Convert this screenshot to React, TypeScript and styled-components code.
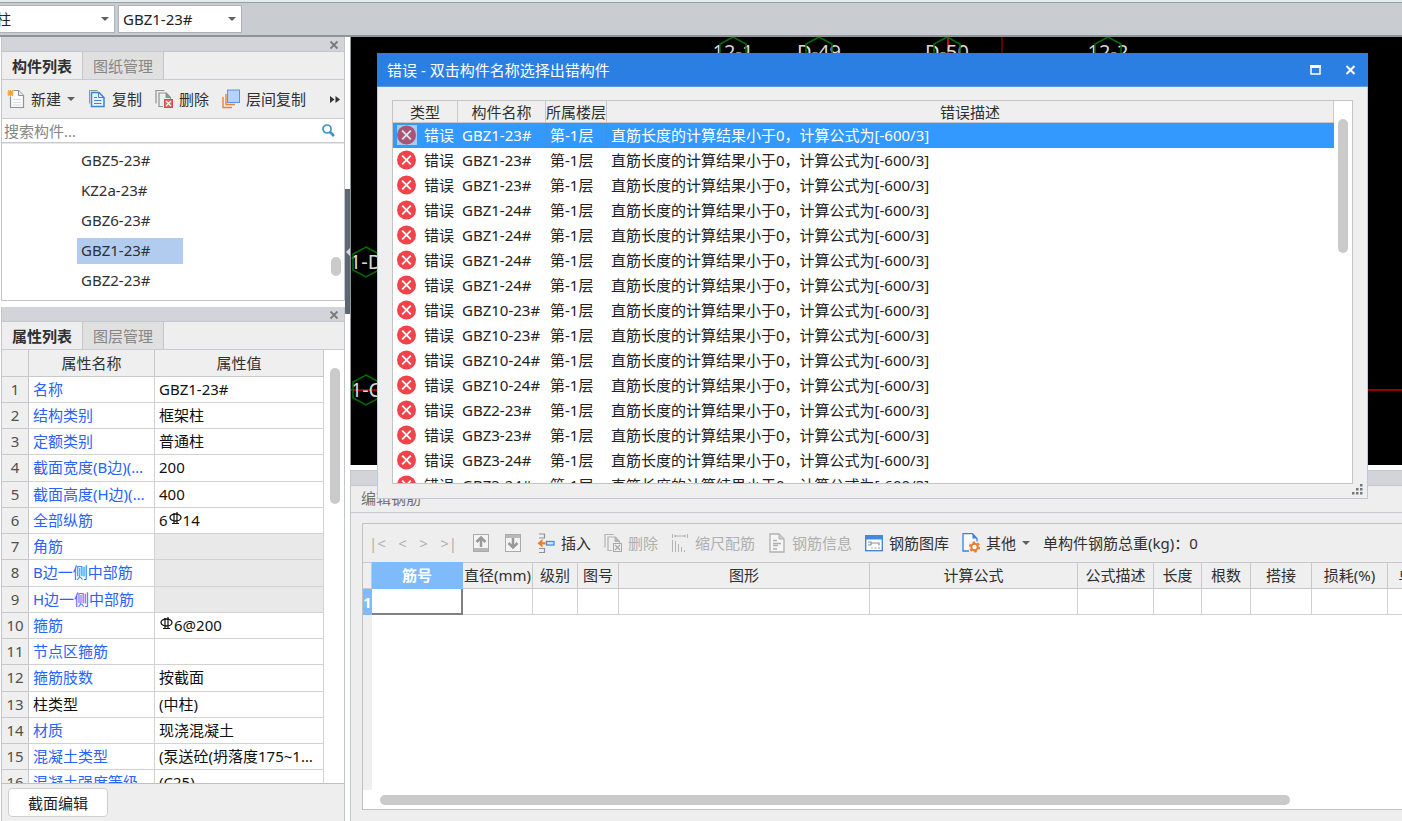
import React from 'react';
import styled, { createGlobalStyle, css } from 'styled-components';

const Global = createGlobalStyle`
  *, *::before, *::after { box-sizing: border-box; }
  html, body { margin: 0; padding: 0; }
  body, button, input, select {
    font-family: "Noto Sans", "Noto Sans CJK SC", sans-serif;
    font-size: 15px;
    line-height: 20px;
    color: #303030;
  }
  button { border: 0; padding: 0; background: none; white-space: nowrap; }
  table { border-collapse: separate; border-spacing: 0; table-layout: fixed; }
  th, td { padding: 0; font-weight: 400; white-space: nowrap; }
  ul { list-style: none; margin: 0; padding: 0; }
  h2 { margin: 0; font-size: 15px; font-weight: 400; }
`;

const Page = styled.div`
  display: flex;
  flex-direction: column;
  height: 100vh;
  overflow: hidden;
  background: #fff;
`;

/* ---------- top bar ---------- */

const TopBar = styled.header`
  flex: none;
  display: flex;
  align-items: flex-start;
  gap: 3px;
  height: 37px;
  padding-top: 3px;
  overflow: hidden;
  background: #c9ccd1;
  border-top: 2px solid #e2ebee;
  border-bottom: 2px solid #8f9498;
  box-shadow: inset 0 1px 0 #9b9fa4;
`;

const ComboWrap = styled.div`
  position: relative;
  flex: none;
  display: flex;
`;

const Combo = styled.select<{ $w: number; $cut?: boolean }>`
  appearance: none;
  width: ${p => p.$w}px;
  height: 28px;
  margin-left: ${p => (p.$cut ? -9 : 0)}px;
  padding: 0 20px 0 4px;
  border: 1px solid #aeb1b6;
  border-radius: 0;
  background: #fff;
  color: #222;
`;

const ComboArrow = styled.span`
  position: absolute;
  right: 6px;
  top: 12px;
  border: 4px solid transparent;
  border-top-color: #606060;
  border-bottom: 0;
`;

/* ---------- frame ---------- */

const Body = styled.div`
  flex: 1;
  min-height: 0;
  display: flex;
`;

const Sidebar = styled.aside`
  flex: none;
  display: flex;
  flex-direction: column;
  gap: 6px;
  width: 345px;
  padding-left: 1px;
`;

const Splitter = styled.div`
  flex: none;
  width: 5px;
  padding-top: 152px;
  background: #fff;
`;

const SplitHandle = styled.button`
  display: flex;
  align-items: center;
  justify-content: center;
  width: 5px;
  height: 125px;
  background: #5d6873;
`;

const Main = styled.main`
  position: relative;
  flex: 1;
  min-width: 0;
  display: flex;
  flex-direction: column;
`;

const Panel = styled.section<{ $fill?: boolean }>`
  display: flex;
  flex-direction: column;
  min-height: 0;
  background: #eee;
  border: 1px solid #c3c5ca;
  border-top: 0;
  ${p => (p.$fill ? css`flex: 1; border-bottom: 0;` : css`flex: 0 0 264px;`)}
`;

const PanelBar = styled.div`
  flex: none;
  display: flex;
  justify-content: flex-end;
  align-items: center;
  height: 15px;
  padding-right: 5px;
  background: #d3d4da;
  border-bottom: 1px solid #c3c7cc;
`;

const Tabs = styled.div`
  flex: none;
  display: flex;
  height: 28px;
  border-bottom: 1px solid #c8cbd0;
`;

const Tab = styled.button<{ $on?: boolean }>`
  width: 81px;
  border-right: 1px solid #c3c7cc;
  background: ${p => (p.$on ? '#eee' : '#e0e0e0')};
  color: ${p => (p.$on ? '#303030' : '#868686')};
  font-weight: ${p => (p.$on ? 700 : 400)};
`;

/* ---------- component list ---------- */

const Tools = styled.div`
  flex: none;
  display: flex;
  align-items: center;
  gap: 13px;
  height: 38px;
  padding-left: 5px;
`;

const Tool = styled.button<{ $off?: boolean; $end?: boolean }>`
  flex: none;
  display: flex;
  align-items: center;
  gap: 6px;
  color: ${p => (p.$off ? '#b0b0b0' : '#303030')};
  ${p => p.$end && css`margin-left: auto; padding-right: 3px;`}
  svg { flex: none; }
`;

const Caret = styled.span`
  border: 4px solid transparent;
  border-top-color: #606060;
  border-bottom: 0;
`;

const Search = styled.label`
  flex: none;
  display: flex;
  align-items: center;
  height: 25px;
  padding: 0 9px 0 2px;
  background: #fff;
  border-top: 1px solid #c8cbd0;
  border-bottom: 1px solid #c8cbd0;
`;

const SearchInput = styled.input`
  flex: 1;
  min-width: 0;
  height: 22px;
  border: 0;
  padding: 0;
  outline: 0;
  background: none;
  &::placeholder { color: #868686; opacity: 1; }
`;

const ListArea = styled.div`
  flex: 1;
  min-height: 0;
  display: flex;
  justify-content: space-between;
  padding: 2px 3px 0 75px;
  background: #fff;
  border-top: 1px solid #e6e6e6;
  overflow: hidden;
`;

const ListItem = styled.li`
  display: flex;
  align-items: center;
  height: 30px;
`;

const ListLabel = styled.span<{ $on?: boolean }>`
  width: 106px;
  height: 26px;
  padding: 2px 4px;
  background: ${p => (p.$on ? '#b1ccee' : 'transparent')};
`;

const Thumb = styled.div<{ $top: number; $h: number }>`
  flex: none;
  width: 10px;
  height: ${p => p.$h}px;
  margin-top: ${p => p.$top}px;
  border-radius: 5px;
  background: #cacaca;
`;

/* ---------- property grid ---------- */

const PropArea = styled.div`
  flex: 1;
  min-height: 0;
  display: flex;
  align-items: flex-start;
  justify-content: space-between;
  padding-right: 4px;
  overflow: hidden;
  background: #fff;
  border-bottom: 1px solid #c0c0c0;
`;

const PropTable = styled.table`
  flex: none;
  width: 322px;
  th, td {
    height: 26px;
    padding: 0 4px 2px;
    border-right: 1px solid #d2d2d2;
    border-bottom: 1px solid #d2d2d2;
    overflow: hidden;
    text-overflow: ellipsis;
    text-align: left;
  }
  thead th {
    height: 27px;
    padding-bottom: 0;
    background: #efefef;
    border-color: #c6c8cb;
    text-align: center;
  }
  tbody tr:nth-child(4n) td { height: 27px; }
`;

const NumCell = styled.td`
  && { padding: 0 0 2px; text-align: center; background: #efefef; border-color: #c6c8cb; color: #505050; }
`;

const NameCell = styled.td<{ $plain?: boolean }>`
  color: ${p => (p.$plain ? '#111' : '#2a62ff')};
`;

const ValueCell = styled.td<{ $off?: boolean }>`
  color: #111;
  background: ${p => (p.$off ? '#e9e9e9' : '#fff')};
  svg { vertical-align: 1px; margin: 0 1px; }
`;

const Footer = styled.div`
  flex: none;
  height: 37px;
  padding: 4px 6px;
`;

const FooterButton = styled.button`
  width: 100px;
  height: 29px;
  border: 1px solid #cfcfcf;
  border-radius: 4px;
  background: #fff;
  color: #222;
`;

/* ---------- drawing view ---------- */

const Canvas = styled.svg`
  flex: none;
  display: block;
  width: 100%;
  height: 428px;
  background: #000;
  border-left: 1px solid #8f9498;
  text {
    font-family: "Noto Sans", sans-serif;
    font-size: 20px;
    fill: #d8d8d8;
  }
`;

/* ---------- rebar editor ---------- */

const Editor = styled.section`
  flex: 1;
  min-height: 0;
  display: flex;
  flex-direction: column;
  margin-top: 5px;
  background: #eee;
  border-top: 1px solid #c3c7cc;
  border-left: 1px solid #c3c7cc;
`;

const EditorTitle = styled.h2`
  flex: none;
  height: 27px;
  padding: 2px 10px;
  color: #707070;
  border-bottom: 1px solid #c8cbd0;
`;

const EditorBox = styled.div`
  flex: 1;
  min-height: 0;
  display: flex;
  flex-direction: column;
  margin: 10px 0 11px 11px;
  border: 1px solid #c0c2c5;
  border-right: 0;
  overflow: hidden;
`;

const EditorTools = styled.div`
  flex: none;
  display: flex;
  align-items: center;
  gap: 13px;
  height: 38px;
  padding-left: 6px;
  white-space: nowrap;
`;

const Nav = styled.div`
  flex: none;
  display: flex;
  align-items: center;
  gap: 16px;
  padding-right: 3px;
`;

const NavSteps = styled.div`
  display: flex;
  justify-content: space-between;
  width: 88px;
`;

const GridArea = styled.div`
  flex: 1;
  min-height: 0;
  overflow: hidden;
  background: linear-gradient(to right, #efefef 9px, #fff 9px);
`;

const RebarTable = styled.table`
  width: 1103px;
  th {
    height: 27px;
    padding-bottom: 1px;
    background: #efefef;
    border: 1px solid #c6c8cb;
    border-left: 0;
  }
  td {
    height: 26px;
    background: #fff;
    border-right: 1px solid #d2d2d2;
    border-bottom: 1px solid #d2d2d2;
  }
  th.on, td.num {
    background: #7fbafa;
    border-color: #7fbafa;
    color: #fff;
    font-weight: 700;
  }
  td.num { text-align: center; }
  td.current { border-right: 2px solid #808080; border-bottom: 2px solid #808080; }
`;

const HScroll = styled.div`
  flex: none;
  height: 19px;
  padding: 5px 112px 4px 17px;
  background: #fff;
`;

const HThumb = styled.div`
  height: 10px;
  border-radius: 5px;
  background: #cacaca;
`;

/* ---------- error dialog ---------- */

const Dialog = styled.section`
  position: absolute;
  left: 27px;
  right: 34px;
  top: 16px;
  display: flex;
  flex-direction: column;
  height: 446px;
  background: #efefef;
`;

const DialogBar = styled.header`
  flex: none;
  display: flex;
  align-items: center;
  gap: 24px;
  height: 34px;
  padding: 0 12px 0 10px;
  background: #2c7fe2;
  border-bottom: 1px solid #5b9bea;
  h2 { flex: 1; color: #fff; }
  svg { display: block; }
`;

const DialogBody = styled.div`
  flex: 1;
  min-height: 0;
  display: flex;
  flex-direction: column;
  align-items: flex-end;
  padding: 13px 14px 0;
  border: 1px solid #bccadb;
  border-top: 0;
`;

const ErrorArea = styled.div`
  flex: none;
  display: flex;
  align-items: flex-start;
  width: 100%;
  height: 384px;
  padding-right: 4px;
  overflow: hidden;
  background: #fff;
  border: 1px solid #c4c4c4;
`;

const ErrorTable = styled.table`
  flex: 1;
  width: 100%;
  margin-right: 4px;
  th {
    height: 22px;
    background: #efefef;
    border-right: 1px solid #c6c8cb;
    border-bottom: 1px solid #c6c8cb;
  }
  td { height: 25px; padding: 0 4px 2px; color: #222; overflow: hidden; }
`;

const ErrorRow = styled.tr<{ $on?: boolean }>`
  ${p => p.$on && css`td { background: #3399ff; color: #fff; } td.focus { outline: 1px dotted #b0703c; outline-offset: -1px; }`}
`;

const TypeCell = styled.div`
  display: flex;
  align-items: center;
  gap: 7px;
  svg { flex: none; }
`;

const Grip = styled.svg`
  flex: none;
  display: block;
  margin-right: -10px;
`;

/* ---------- icons ---------- */

const Close = () => (
  <svg width="10" height="10" viewBox="0 0 10 10"><path d="M1.500 1.500l7 7M8.500 1.500l-7 7" stroke="#7c7c7c" strokeWidth="1.900" /></svg>
);

const NewIcon = () => (
  <svg width="18" height="20" viewBox="0 0 18 20" fill="none">
    <path d="M3.500 1.500h8l5 5v12h-13z" fill="#fafafa" stroke="#8c9399" strokeWidth="1.200" />
    <path d="M11.500 1.500v5h5" stroke="#8c9399" fill="#e4e6e8" />
    <path d="M6 10.500h8M6 13.500h8M6 16h8" stroke="#dedede" />
    <rect x="0" y="1" width="6.500" height="6.500" fill="#efefef" />
    <path d="M3.500 1v6M.5 4h6M1 1.500l5 5M6 1.500l-5 5" stroke="#f5a32c" strokeWidth="1.400" />
  </svg>
);

const CopyIcon = () => (
  <svg width="18" height="20" viewBox="0 0 18 20" fill="none">
    <path d="M1.500 14.500v-13h8" stroke="#8c9399" />
    <path d="M3.500 3.500h7.500l5 5v9h-12.500z" fill="#e9f2fd" stroke="#3e82d8" strokeWidth="1.500" />
    <path d="M10.500 3.500v5h5.500" stroke="#3e82d8" />
    <path d="M6 8.500h3M6 11.500h7.500M6 14.500h7.500" stroke="#3e82d8" />
  </svg>
);

const DeleteIcon = ({ off = false }: { off?: boolean }) => {
  const line = off ? '#b4b4b4' : '#8c9399';
  const box = off ? '#a8a8a8' : '#d05050';
  return (
    <svg width="18" height="20" viewBox="0 0 18 20" fill="none">
      <path d="M1 14.500v-13h8.500M8 17.500h-4v-13.500h7.500l4 4.500v2" stroke={line} strokeWidth="1.200" />
      <path d="M11 4v4.500h4.500z" stroke={line} fill={line} />
      <rect x="9.500" y="10.500" width="8" height="8" fill={off ? '#efefef' : '#d96464'} stroke={box} />
      <path d="M11 12l5 5M16 12l-5 5" stroke={off ? '#a8a8a8' : '#fff'} strokeWidth="1.200" />
    </svg>
  );
};

const FloorIcon = () => (
  <svg width="18" height="20" viewBox="0 0 18 20" fill="none">
    <path d="M1 8v10.500h9M4 5v10.500h9" stroke="#ee8138" strokeWidth="1.400" />
    <rect x="5.500" y="1" width="12" height="12.500" fill="#b5d3fa" stroke="#5a96e6" />
  </svg>
);

const More = () => (
  <svg width="11" height="9" viewBox="0 0 11 9" fill="#333"><path d="M0 1l4.500 3.500L0 8zM5.500 1L10 4.500 5.500 8z" /></svg>
);

const SearchIcon = () => (
  <svg width="13" height="13" viewBox="0 0 13 13" fill="none" stroke="#3f93c8">
    <circle cx="5" cy="5" r="4" strokeWidth="1.700" /><path d="M8 8l4 4" strokeWidth="2.600" />
  </svg>
);

const Rebar = () => (
  <svg width="13" height="13" viewBox="0 0 13 13" fill="none" stroke="#111">
    <ellipse cx="6.500" cy="5.500" rx="5.500" ry="3.500" strokeWidth="1.300" />
    <path d="M5 1v10.500M8 0v11.500M3 11.500h7" strokeWidth="1.200" />
  </svg>
);

const MoveIcon = ({ down = false }: { down?: boolean }) => (
  <svg width="16" height="18" viewBox="0 0 16 18" fill="none" stroke="#999">
    <rect x=".5" y=".5" width="15" height="17" fill="#f4f4f4" stroke="#aaa" />
    {down
      ? <><path d="M1 2.500h14" strokeWidth="3" stroke="#b8b8b8" /><path d="M8 4v9M3.500 9L8 13.500 12.500 9" strokeWidth="2.500" /></>
      : <><path d="M1 15.500h14" strokeWidth="3" stroke="#b8b8b8" /><path d="M8 13V4M3.500 8L8 3.500 12.500 8" strokeWidth="2.500" /></>}
  </svg>
);

const InsertIcon = () => (
  <svg width="18" height="20" viewBox="0 0 18 20" fill="none">
    <path d="M2 1h5.500v4H2M2 15.500h5.500v4H2" stroke="#8c9399" strokeWidth="1.200" />
    <path d="M3 10.300h5.500" stroke="#ee7a2a" strokeWidth="2.200" />
    <path d="M5.500 6v2.500L4 10.300l1.500 1.800v2.500L.5 10.300z" fill="#ee7a2a" />
    <rect x="9.500" y="8.500" width="7.500" height="3.500" fill="#d6e6fa" stroke="#4a8ee0" strokeWidth="1.300" />
  </svg>
);

const ScaleIcon = () => (
  <svg width="18" height="20" viewBox="0 0 18 20" fill="none" stroke="#b4b4b4">
    <path d="M1.500 1v4M16.500 1v4M3 3h12M1.500 7v12M4.500 8v11M7.500 11v8M10.500 14v5M13.500 17v2" />
    <path d="M3 3l2-1.500v3zM15 3l-2-1.500v3z" fill="#b4b4b4" stroke="none" />
  </svg>
);

const InfoIcon = () => (
  <svg width="18" height="20" viewBox="0 0 18 20" fill="none" stroke="#b0b0b0">
    <path d="M2 1h9l5 5v13H2z" fill="#f6f6f6" strokeWidth="1.300" />
    <path d="M11 1v5h5" fill="#ccc" />
    <path d="M5 7.500h4M5 10.500h8M5 12.500h5M5 16h4" strokeWidth="1.300" />
  </svg>
);

const LibraryIcon = () => (
  <svg width="18" height="18" viewBox="0 0 18 18" fill="none">
    <rect x=".7" y="1.700" width="16.600" height="15" fill="#fff" stroke="#3e7fd0" strokeWidth="1.300" />
    <path d="M1 3.500h16" stroke="#3e8ae6" strokeWidth="4" />
    <path d="M3 8h3v3H3M6 11v-2h8v2.500" stroke="#909090" strokeWidth="1.200" />
    <path d="M6 14h2" stroke="#e8a050" /><path d="M9.500 14h2" stroke="#70b870" /><path d="M13 14h2" stroke="#e07070" />
  </svg>
);

const OtherIcon = () => (
  <svg width="18" height="20" viewBox="0 0 18 20" fill="none">
    <path d="M1 .7h9.500l4.500 4.800V18H1z" fill="#f6faff" stroke="#3e82d8" strokeWidth="1.300" />
    <path d="M10.500.7v4.800H15z" fill="#3e82d8" />
    <rect x="7" y="8.500" width="11" height="11.500" fill="#efefef" />
    <circle cx="12.500" cy="14" r="4.800" stroke="#ee7a2a" strokeWidth="1.600" strokeDasharray="2.500 2.527" />
    <circle cx="12.500" cy="14" r="3.200" stroke="#ee7a2a" strokeWidth="2" fill="#fff" />
  </svg>
);

const ErrorIcon = ({ on = false }: { on?: boolean }) => (
  <svg width="20" height="20" viewBox="0 0 20 20" fill="none">
    {on && <rect width="20" height="20" fill="#a3cdf6" />}
    <circle cx="9.500" cy="10" r="9.500" fill={on ? '#a85674' : '#f0444a'} />
    <path d="M5.200 5.700l8.600 8.600M13.800 5.700l-8.600 8.600" stroke={on ? '#dbe4f4' : '#fff'} strokeWidth="1.800" />
  </svg>
);

/* ---------- data ---------- */

const components = ['GBZ5-23#', 'KZ2a-23#', 'GBZ6-23#', 'GBZ1-23#', 'GBZ2-23#'];

type Prop = { name: string; value?: React.ReactNode; plain?: boolean; off?: boolean };
const props: Prop[] = [
  { name: '名称', value: 'GBZ1-23#' },
  { name: '结构类别', value: '框架柱' },
  { name: '定额类别', value: '普通柱' },
  { name: '截面宽度(B边)(mm)', value: '200' },
  { name: '截面高度(H边)(mm)', value: '400' },
  { name: '全部纵筋', value: <>6<Rebar />14</> },
  { name: '角筋', off: true },
  { name: 'B边一侧中部筋', off: true },
  { name: 'H边一侧中部筋', off: true },
  { name: '箍筋', value: <><Rebar />6@200</> },
  { name: '节点区箍筋' },
  { name: '箍筋肢数', value: '按截面' },
  { name: '柱类型', value: '(中柱)', plain: true },
  { name: '材质', value: '现浇混凝土' },
  { name: '混凝土类型', value: '(泵送砼(坍落度175~190mm))' },
  { name: '混凝土强度等级', value: '(C25)' },
];

const errors = [
  'GBZ1-23#', 'GBZ1-23#', 'GBZ1-23#', 'GBZ1-24#', 'GBZ1-24#', 'GBZ1-24#', 'GBZ1-24#', 'GBZ10-23#',
  'GBZ10-23#', 'GBZ10-24#', 'GBZ10-24#', 'GBZ2-23#', 'GBZ3-23#', 'GBZ3-24#', 'GBZ3-24#',
];

const rebarColumns: [string, number][] = [
  ['筋号', 91], ['直径(mm)', 70], ['级别', 45], ['图号', 41], ['图形', 251], ['计算公式', 208],
  ['公式描述', 76], ['长度', 48], ['根数', 49], ['搭接', 61], ['损耗(%)', 76], ['单重(kg)', 78],
];

const axes = [
  { x: 382, y: 15, label: '12-1' },
  { x: 468, y: 15, label: 'D-49' },
  { x: 596, y: 15, label: 'D-50' },
  { x: 757, y: 15, label: '12-2' },
  { x: 15, y: 225, label: '1-D' },
  { x: 15, y: 353, label: '1-C' },
];

const hexagon = (x: number, y: number) =>
  `${x},${y - 15} ${x + 13},${y - 8} ${x + 13},${y + 8} ${x},${y + 15} ${x - 13},${y + 8} ${x - 13},${y - 8}`;

export default function App() {
  return (
    <Page>
      <Global />
      <TopBar>
        <ComboWrap>
          <Combo $w={124} $cut aria-label="构件类型"><option>柱</option></Combo>
          <ComboArrow />
        </ComboWrap>
        <ComboWrap>
          <Combo $w={124} aria-label="构件"><option>GBZ1-23#</option></Combo>
          <ComboArrow />
        </ComboWrap>
      </TopBar>

      <Body>
        <Sidebar>
          <Panel>
            <PanelBar><button aria-label="关闭"><Close /></button></PanelBar>
            <Tabs>
              <Tab $on>构件列表</Tab>
              <Tab>图纸管理</Tab>
            </Tabs>
            <Tools>
              <Tool><NewIcon />新建<Caret /></Tool>
              <Tool><CopyIcon />复制</Tool>
              <Tool><DeleteIcon />删除</Tool>
              <Tool><FloorIcon />层间复制</Tool>
              <Tool $end aria-label="更多"><More /></Tool>
            </Tools>
            <Search>
              <SearchInput placeholder="搜索构件..." aria-label="搜索构件" />
              <SearchIcon />
            </Search>
            <ListArea>
              <ul>
                {components.map(c => (
                  <ListItem key={c}><ListLabel $on={c === 'GBZ1-23#'}>{c}</ListLabel></ListItem>
                ))}
              </ul>
              <Thumb $top={111} $h={19} />
            </ListArea>
          </Panel>

          <Panel $fill>
            <PanelBar><button aria-label="关闭"><Close /></button></PanelBar>
            <Tabs>
              <Tab $on>属性列表</Tab>
              <Tab>图层管理</Tab>
            </Tabs>
            <PropArea>
              <PropTable>
                <colgroup><col width="27" /><col width="126" /><col width="169" /></colgroup>
                <thead><tr><th /><th>属性名称</th><th>属性值</th></tr></thead>
                <tbody>
                  {props.map((p, i) => (
                    <tr key={p.name}>
                      <NumCell>{i + 1}</NumCell>
                      <NameCell $plain={p.plain}>{p.name}</NameCell>
                      <ValueCell $off={p.off}>{p.value}</ValueCell>
                    </tr>
                  ))}
                </tbody>
              </PropTable>
              <Thumb $top={18} $h={136} />
            </PropArea>
            <Footer><FooterButton>截面编辑</FooterButton></Footer>
          </Panel>
        </Sidebar>

        <Splitter>
          <SplitHandle aria-label="折叠">
            <svg width="4" height="8" viewBox="0 0 4 8"><path d="M4 0v8L0 4z" fill="#d8dce0" /></svg>
          </SplitHandle>
        </Splitter>

        <Main>
          <Canvas>
            <line x1="0" x2="100%" y1="353" y2="353" stroke="#960000" strokeWidth="2" />
            <line x1="597" x2="597" y1="0" y2="100%" stroke="#d00000" strokeWidth="2" />
            <line x1="651" x2="651" y1="0" y2="100%" stroke="#5a0000" strokeWidth="2" />
            {axes.map(a => (
              <g key={a.label}>
                <text x={a.x} y={a.y + 7} textAnchor="middle">{a.label}</text>
                <polygon points={hexagon(a.x, a.y)} fill="none" stroke="#006e00" strokeWidth="1.500" />
              </g>
            ))}
          </Canvas>

          <Editor>
            <PanelBar />
            <EditorTitle>编辑钢筋</EditorTitle>
            <EditorBox>
              <EditorTools>
                <Nav>
                  <NavSteps>
                    <Tool $off aria-label="第一条">|&lt;</Tool>
                    <Tool $off aria-label="上一条">&lt;</Tool>
                    <Tool $off aria-label="下一条">&gt;</Tool>
                    <Tool $off aria-label="最后一条">&gt;|</Tool>
                  </NavSteps>
                  <Tool $off aria-label="上移"><MoveIcon /></Tool>
                  <Tool $off aria-label="下移"><MoveIcon down /></Tool>
                </Nav>
                <Tool><InsertIcon />插入</Tool>
                <Tool $off><DeleteIcon off />删除</Tool>
                <Tool $off><ScaleIcon />缩尺配筋</Tool>
                <Tool $off><InfoIcon />钢筋信息</Tool>
                <Tool><LibraryIcon />钢筋图库</Tool>
                <Tool><OtherIcon />其他<Caret /></Tool>
                <span>单构件钢筋总重(kg)：0</span>
              </EditorTools>
              <GridArea>
                <RebarTable>
                  <colgroup>
                    <col width="9" />
                    {rebarColumns.map(([name, w]) => <col key={name} width={w} />)}
                  </colgroup>
                  <thead>
                    <tr>
                      <th />
                      {rebarColumns.map(([name], i) => (
                        <th key={name} className={i === 0 ? 'on' : undefined}>{name}</th>
                      ))}
                    </tr>
                  </thead>
                  <tbody>
                    <tr>
                      <td className="num">1</td>
                      {rebarColumns.map(([name], i) => (
                        <td key={name} className={i === 0 ? 'current' : undefined} />
                      ))}
                    </tr>
                  </tbody>
                </RebarTable>
              </GridArea>
              <HScroll><HThumb /></HScroll>
            </EditorBox>
          </Editor>

          <Dialog role="dialog" aria-label="错误">
            <DialogBar>
              <h2>错误 - 双击构件名称选择出错构件</h2>
              <button aria-label="最大化">
                <svg width="11" height="10" viewBox="0 0 11 10"><path d="M1 1h9v8H1z" fill="none" stroke="#fff" strokeWidth="1.500" /><path d="M0 1.500h11" stroke="#fff" strokeWidth="3" /></svg>
              </button>
              <button aria-label="关闭">
                <svg width="11" height="10" viewBox="0 0 11 10"><path d="M1.500 1l8 8M9.500 1l-8 8" stroke="#fff" strokeWidth="2" /></svg>
              </button>
            </DialogBar>
            <DialogBody>
              <ErrorArea>
                <ErrorTable>
                  <colgroup><col width="65" /><col width="88" /><col width="61" /><col /></colgroup>
                  <thead><tr><th>类型</th><th>构件名称</th><th>所属楼层</th><th>错误描述</th></tr></thead>
                  <tbody>
                    {errors.map((e, i) => (
                      <ErrorRow key={i} $on={i === 0}>
                        <td><TypeCell><ErrorIcon on={i === 0} />错误</TypeCell></td>
                        <td>{e}</td>
                        <td className="focus">第-1层</td>
                        <td>直筋长度的计算结果小于0，计算公式为[-600/3]</td>
                      </ErrorRow>
                    ))}
                  </tbody>
                </ErrorTable>
                <Thumb $top={18} $h={134} />
              </ErrorArea>
              <Grip width="11" height="11" viewBox="0 0 11 11" fill="#707880">
                <path d="M8 0h2.500v2.500H8zM8 4h2.500v2.500H8zM4 4h2.500v2.500H4zM8 8h2.500v2.500H8zM4 8h2.500v2.500H4zM0 8h2.500v2.500H0z" />
              </Grip>
            </DialogBody>
          </Dialog>
        </Main>
      </Body>
    </Page>
  );
}
